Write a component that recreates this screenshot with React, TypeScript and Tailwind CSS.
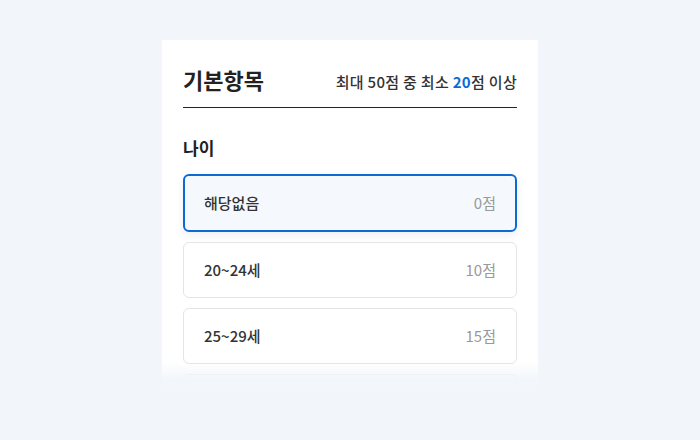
const options = [
  { label: '해당없음', score: 0 },
  { label: '20~24세', score: 10 },
  { label: '25~29세', score: 15 },
];

export default function App() {
  const selected = 0;

  return (
    <div
      className="flex h-[440px] w-[700px] justify-center overflow-hidden bg-[#f2f6fa] pt-10"
      style={{ fontFamily: '"Noto Sans CJK KR", "Noto Sans", sans-serif' }}
    >
      <div className="relative h-[356px] w-[376px] overflow-hidden bg-white px-[21px] pt-[24px]">
        {/* Header */}
        <div className="flex items-end justify-between border-b border-[#222] pb-[13px]">
          <h2 className="text-[22px] font-bold leading-[30px] text-[#222]">기본항목</h2>
          <p className="pb-[2px] text-[15px] font-medium leading-5 tracking-[0.3px] text-[#333]">
            최대 50점 중 최소 <span className="font-bold text-[#0b6bd3]">20</span>점 이상
          </p>
        </div>

        {/* Age */}
        <h3 className="mt-[28px] text-[17px] font-bold leading-6 text-[#222]">나이</h3>
        <ul className="mt-[14px] flex flex-col gap-[10px]">
          {options.map((o, i) =>
            i === selected ? (
              <li
                key={o.label}
                className="flex h-[58px] items-center justify-between rounded-md border-2 border-[#0b6bd3] bg-[#f5f9fd] px-[19px] shadow-[0_3px_8px_rgba(0,40,100,0.08)]"
              >
                <span className="text-[15px] font-medium text-[#333]">{o.label}</span>
                <span className="text-[15px] text-[#999]">{o.score}점</span>
              </li>
            ) : (
              <li
                key={o.label}
                className="flex h-[56px] items-center justify-between rounded-md border border-[#e2e4e8] bg-white px-[20px]"
              >
                <span className="text-[15px] font-medium text-[#333]">{o.label}</span>
                <span className="text-[15px] text-[#999]">{o.score}점</span>
              </li>
            )
          )}
          {/* next option, faded out below the fold */}
          <li className="h-[56px] rounded-md border border-[#e2e4e8] bg-white" />
        </ul>

        {/* Fade */}
        <div className="absolute inset-x-0 bottom-0 h-[34px] bg-gradient-to-b from-[#f2f6fa]/0 via-[#f2f6fa]/95 via-50% to-[#f2f6fa]" />
      </div>
    </div>
  );
}
